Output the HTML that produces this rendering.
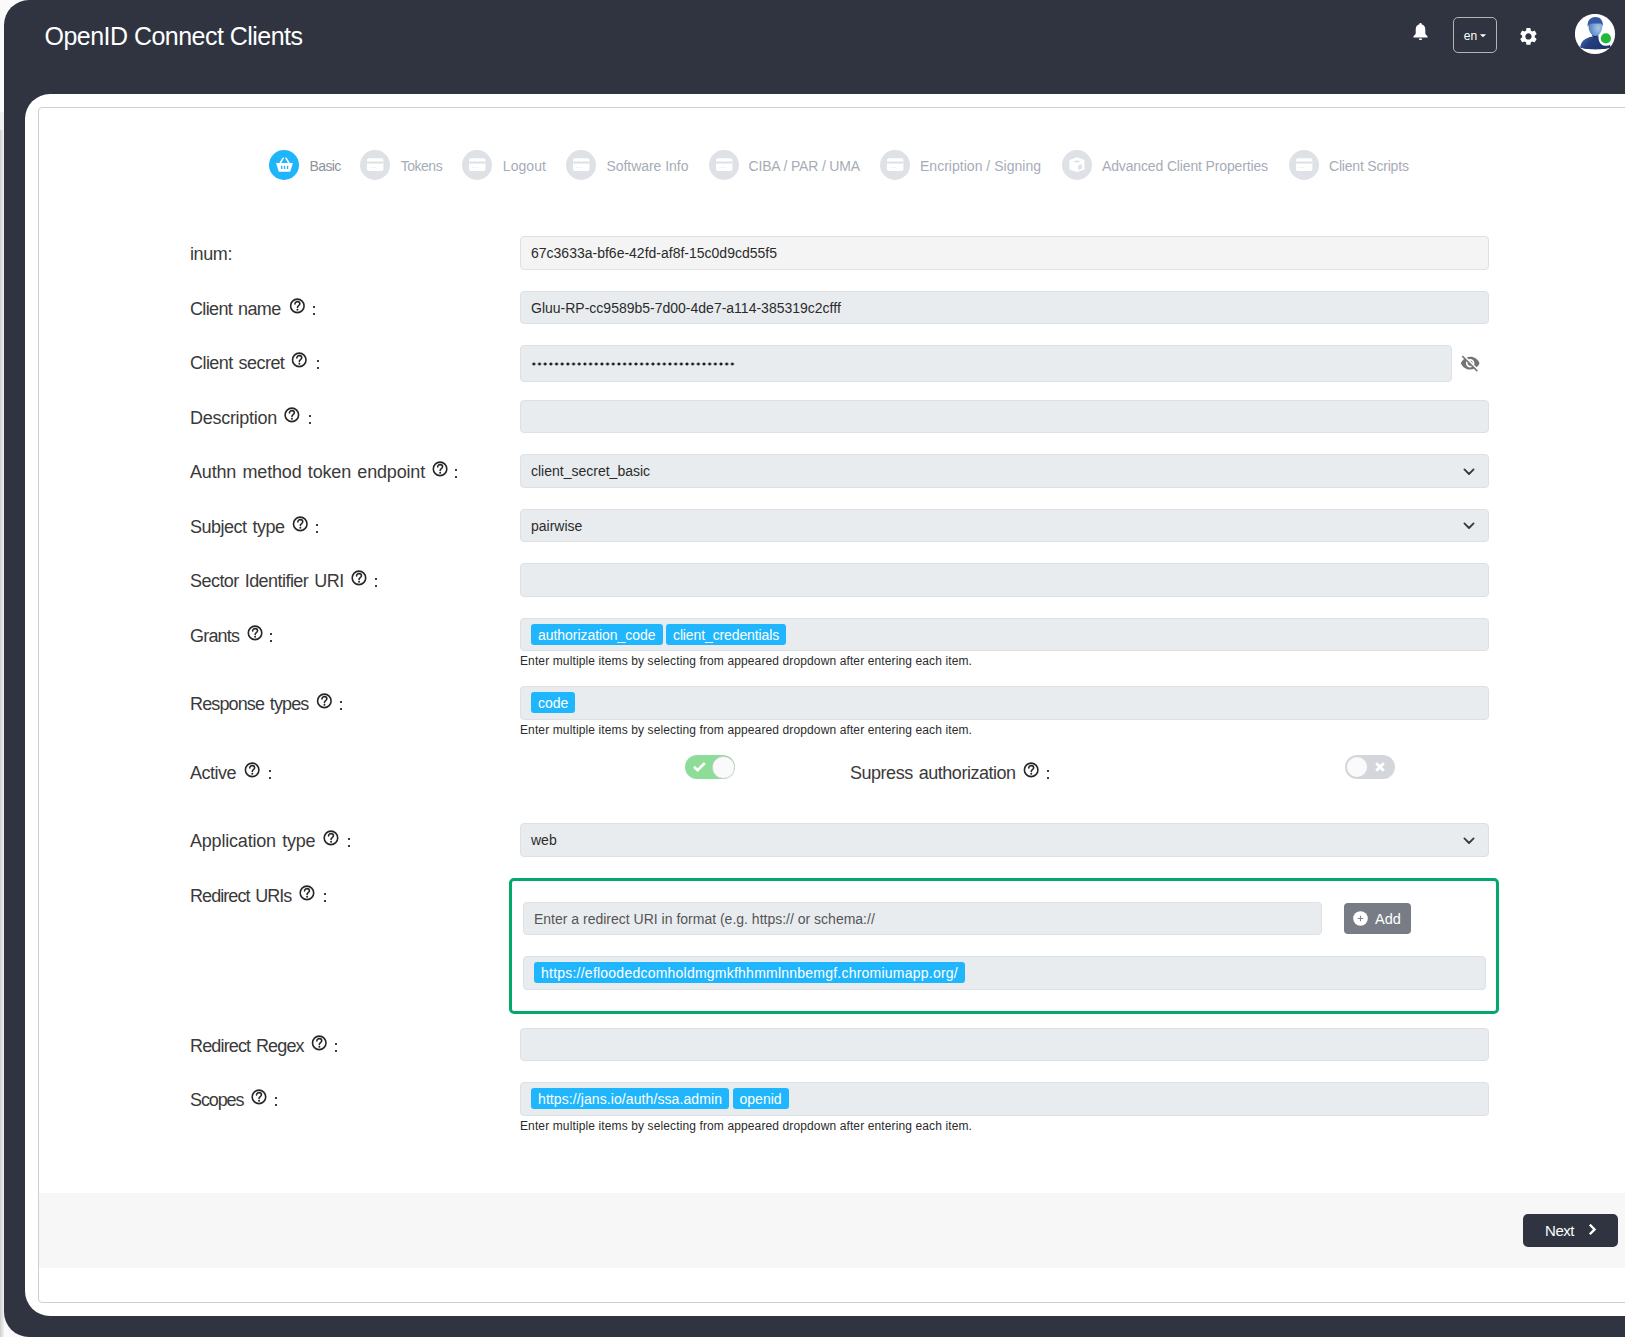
<!DOCTYPE html>
<html><head><meta charset="utf-8">
<style>
*{box-sizing:border-box;}
html,body{margin:0;padding:0;}
body{width:1625px;height:1337px;overflow:hidden;position:relative;background:#fafafa;font-family:"Liberation Sans",sans-serif;color:#2b2b2b;}
.abs{position:absolute;}
.frame{position:absolute;left:4px;top:0;width:1700px;height:1337px;background:#2f3440;border-radius:25px 0 0 25px;}
.title{position:absolute;left:44.5px;top:19.5px;font-size:25px;letter-spacing:-0.53px;color:#fff;white-space:nowrap;line-height:32px;}
.panel{position:absolute;left:25px;top:94px;width:1700px;height:1222px;background:#fff;border-radius:25px 0 0 25px;}
.card{position:absolute;left:38px;top:107px;width:1700px;height:1196px;border:1px solid #cfcfcf;border-radius:4px;background:#fff;}
.footer{position:absolute;left:39px;top:1193px;width:1700px;height:75px;background:#f7f7f7;}
.next{position:absolute;left:1523px;top:1214px;width:95px;height:33px;background:#2f3440;border-radius:5px;color:#fff;font-size:15px;}
.sc{position:absolute;width:30px;height:30px;border-radius:50%;background:#dee2e6;top:150px;}
.sc svg{position:absolute;left:0;top:0;}
.st{position:absolute;top:158px;font-size:14px;color:#a6acb7;white-space:nowrap;line-height:16px;}
.lbl{position:absolute;font-size:18px;color:#3a3a3a;white-space:nowrap;line-height:22px;}
.inp{position:absolute;left:520px;background:#e9ecef;border:1px solid #dde1e5;border-radius:4px;font-size:14px;color:#2b2b2b;white-space:nowrap;}
.inp.ro{background:#f4f4f4;}
.inp span.v{position:absolute;left:10px;line-height:16px;}
.chipwrap{position:absolute;left:10px;display:flex;gap:3.5px;}
.chip{display:block;height:21px;background:#1fb6fd;color:#fff;border-radius:3px;font-size:14px;line-height:23px;padding:0 7px;white-space:nowrap;}
.htxt{position:absolute;left:520px;font-size:12px;color:#2b2b2b;white-space:nowrap;line-height:14px;letter-spacing:0.12px;}
.chev{position:absolute;right:13px;line-height:0;}
.dots{position:absolute;left:9.96px;top:16px;width:204.7px;height:4px;background-image:radial-gradient(circle at 2.843px 2px,#1a1a1a 1.25px,transparent 1.75px);background-size:5.686px 4px;}
</style></head>
<body>
<div class="abs" style="left:0;top:112px;width:4px;height:18px;background:#efefef"></div>
<div class="abs" style="left:0;top:130px;width:4px;height:1207px;background:linear-gradient(90deg,#cdcdcd,#f2f2f2)"></div>
<div class="frame"></div>
<div class="title">OpenID Connect Clients</div>

<!-- header icons -->
<svg class="abs" style="left:1412px;top:22px" width="17" height="19" viewBox="0 0 17 19"><path d="M8.5 1 C9.3 1 9.6 1.6 9.6 2.2 C12 2.8 13.3 4.8 13.3 7.6 L13.3 11.8 L15.6 14.6 L15.6 15.6 L1.4 15.6 L1.4 14.6 L3.7 11.8 L3.7 7.6 C3.7 4.8 5 2.8 7.4 2.2 C7.4 1.6 7.7 1 8.5 1 Z" fill="#fff"/><path d="M6.8 16.4 L10.2 16.4 C10.2 17.4 9.5 18.1 8.5 18.1 C7.5 18.1 6.8 17.4 6.8 16.4Z" fill="#fff"/></svg>
<div class="abs" style="left:1453px;top:17px;width:44px;height:36px;border:1.2px solid #b4b4b4;border-radius:5px;"></div>
<div class="abs" style="left:1463.8px;top:28px;font-size:12px;line-height:16px;color:#fff;letter-spacing:0.1px">en</div>
<svg class="abs" style="left:1479px;top:34px" width="8" height="5" viewBox="0 0 8 5"><path d="M0.9 0.2 L7.1 0.2 L4 3.3Z" fill="#fff"/></svg>
<svg class="abs" style="left:1518px;top:26px" width="20.9" height="20.9" viewBox="0 0 24 24"><path fill="#fff" d="M19.14 12.94c.04-.3.06-.61.06-.94 0-.32-.02-.64-.07-.94l2.03-1.58a.49.49 0 0 0 .12-.61l-1.92-3.32a.488.488 0 0 0-.59-.22l-2.39.96c-.5-.38-1.03-.7-1.62-.94l-.36-2.54a.484.484 0 0 0-.48-.41h-3.84c-.24 0-.43.17-.47.41l-.36 2.54c-.59.24-1.13.57-1.62.94l-2.39-.96c-.22-.08-.47 0-.59.22L2.74 8.87c-.12.21-.08.47.12.61l2.03 1.58c-.05.3-.09.63-.09.94s.02.64.07.94l-2.03 1.58a.49.49 0 0 0-.12.61l1.92 3.32c.12.22.37.29.59.22l2.39-.96c.5.38 1.03.7 1.62.94l.36 2.54c.05.24.24.41.48.41h3.84c.24 0 .44-.17.47-.41l.36-2.54c.59-.24 1.13-.56 1.62-.94l2.39.96c.22.08.47 0 .59-.22l1.92-3.32c.12-.22.07-.47-.12-.61l-2.01-1.58zM12 15.6c-1.98 0-3.6-1.62-3.6-3.6s1.62-3.6 3.6-3.6 3.6 1.62 3.6 3.6-1.62 3.6-3.6 3.6z"/></svg>
<svg class="abs" style="left:1575px;top:14px" width="42" height="42" viewBox="0 0 42 42">
<defs><radialGradient id="fg" cx="0.7" cy="0.55" r="0.7"><stop offset="0" stop-color="#a9c8e8"/><stop offset="1" stop-color="#4f7cc0"/></radialGradient>
<linearGradient id="bg2" x1="0" y1="0" x2="1" y2="0.4"><stop offset="0" stop-color="#4a73b8"/><stop offset="0.45" stop-color="#243d7e"/><stop offset="1" stop-color="#1f3370"/></linearGradient></defs>
<circle cx="20" cy="20" r="20.1" fill="#fff"/>
<path d="M5.2 33.5 C5.6 27.5 10 23.6 17.5 22.4 L23 22.4 C30.5 23.6 35 27.5 35.6 33.5 C30 36 10.5 36 5.2 33.5Z" fill="url(#bg2)"/>
<path d="M17 20.5 L17.5 22.6 C19 23.6 21.5 23.6 23 22.6 L23.5 20.5Z" fill="#1c2f66"/>
<path d="M13.5 12 C13.5 7 16 4 20.3 4 C24.8 4 27.6 7 27.4 12 C27.2 17.5 24.5 22 20.4 22 C16.3 22 13.7 17.5 13.5 12Z" fill="url(#fg)"/>
<path d="M12.6 12.5 C12.3 6.5 15.5 3.1 20.3 3.1 C25.3 3.1 28.3 6.5 27.9 12 C27.2 10.5 26.5 9.8 25.5 9.6 C22 9.2 18.5 9.4 15 9.8 C14 10.5 13.4 11.5 12.6 12.5Z" fill="#3559a6"/>
<circle cx="30.9" cy="24.4" r="7.4" fill="#fff"/><circle cx="30.9" cy="24.4" r="5.1" fill="#20b93a"/>
</svg>

<div class="panel"></div>
<div class="card"></div>

<!-- steps -->
<div class="sc" style="left:269px;background:#1fb5fb"><svg width="30" height="30" viewBox="0 0 30 30"><path d="M7.1 13 L23.9 13 L21.2 21.8 L9.8 21.8 Z" fill="#fff"/><path d="M11.2 13 L14.2 8.2 M19.9 13 L17 8.2" stroke="#fff" stroke-width="1.5" stroke-linecap="round"/><path d="M12.7 15.8 V19 M15.5 15.8 V19 M18.6 15.8 V19" stroke="#1fb5fb" stroke-width="1.3"/></svg></div>
<div class="st" style="left:309.5px;color:#8d939d;letter-spacing:-0.6px">Basic</div>
<div class="sc" style="left:360px"><svg width="30" height="30" viewBox="0 0 30 30"><rect x="7" y="8.2" width="16.4" height="12.8" rx="1.8" fill="#fff"/><rect x="7" y="11.5" width="16.4" height="2.1" fill="#dee2e6"/><path d="M10 17.6 H12 M13 17.6 H16" stroke="#e8eaed" stroke-width="0.6"/></svg></div>
<div class="st" style="left:400.7px;letter-spacing:-0.477px">Tokens</div>
<div class="sc" style="left:462px"><svg width="30" height="30" viewBox="0 0 30 30"><rect x="7" y="8.2" width="16.4" height="12.8" rx="1.8" fill="#fff"/><rect x="7" y="11.5" width="16.4" height="2.1" fill="#dee2e6"/><path d="M10 17.6 H12 M13 17.6 H16" stroke="#e8eaed" stroke-width="0.6"/></svg></div>
<div class="st" style="left:502.8px;letter-spacing:0.062px">Logout</div>
<div class="sc" style="left:566px"><svg width="30" height="30" viewBox="0 0 30 30"><rect x="7" y="8.2" width="16.4" height="12.8" rx="1.8" fill="#fff"/><rect x="7" y="11.5" width="16.4" height="2.1" fill="#dee2e6"/><path d="M10 17.6 H12 M13 17.6 H16" stroke="#e8eaed" stroke-width="0.6"/></svg></div>
<div class="st" style="left:606.4px;letter-spacing:-0.038px">Software Info</div>
<div class="sc" style="left:709px"><svg width="30" height="30" viewBox="0 0 30 30"><rect x="7" y="8.2" width="16.4" height="12.8" rx="1.8" fill="#fff"/><rect x="7" y="11.5" width="16.4" height="2.1" fill="#dee2e6"/><path d="M10 17.6 H12 M13 17.6 H16" stroke="#e8eaed" stroke-width="0.6"/></svg></div>
<div class="st" style="left:748.5px;letter-spacing:-0.163px">CIBA / PAR / UMA</div>
<div class="sc" style="left:880.3px"><svg width="30" height="30" viewBox="0 0 30 30"><rect x="7" y="8.2" width="16.4" height="12.8" rx="1.8" fill="#fff"/><rect x="7" y="11.5" width="16.4" height="2.1" fill="#dee2e6"/><path d="M10 17.6 H12 M13 17.6 H16" stroke="#e8eaed" stroke-width="0.6"/></svg></div>
<div class="st" style="left:920px;letter-spacing:0.018px">Encription / Signing</div>
<div class="sc" style="left:1062px"><svg width="30" height="30" viewBox="0 0 30 30"><path d="M15 7.3 L22.4 10 L22.4 19.5 L15 22.1 L7.4 19.5 L7.4 10 Z" fill="#fff"/><path d="M10.8 11.5 L15 10.2 L19.2 11.5 L15 12.8Z" fill="#dee2e6"/><path d="M16.2 15.3 L19.8 13.9 L19.8 18.8 L16.2 20 Z" fill="#dee2e6"/></svg></div>
<div class="st" style="left:1102px;letter-spacing:-0.141px">Advanced Client Properties</div>
<div class="sc" style="left:1289.4px"><svg width="30" height="30" viewBox="0 0 30 30"><rect x="7" y="8.2" width="16.4" height="12.8" rx="1.8" fill="#fff"/><rect x="7" y="11.5" width="16.4" height="2.1" fill="#dee2e6"/><path d="M10 17.6 H12 M13 17.6 H16" stroke="#e8eaed" stroke-width="0.6"/></svg></div>
<div class="st" style="left:1329px;letter-spacing:-0.198px">Client Scripts</div>

<div class="lbl" style="left:190px;top:243.0px;letter-spacing:-0.403px;word-spacing:0px">inum:</div>
<div class="lbl" style="left:190px;top:298.0px;letter-spacing:-0.641px;word-spacing:1.5px">Client name</div>
<div class="abs" style="left:288px;top:297px;width:17px;height:17px"><svg width="17" height="17" viewBox="0 0 17 17"><circle cx="9.35" cy="8.90" r="6.75" fill="none" stroke="#262626" stroke-width="1.6"/><g transform="translate(1.75,1.35)"><path d="M5.2 5.7 C5.2 4.1 6.3 3.3 7.7 3.3 C9.1 3.3 10.1 4.2 10.1 5.4 C10.1 6.6 9.1 7.1 8.4 7.7 C7.9 8.1 7.7 8.5 7.7 9.2" fill="none" stroke="#262626" stroke-width="1.6" stroke-linecap="round"/><circle cx="7.7" cy="11.45" r="1.0" fill="#262626"/></g></svg></div>
<div class="abs" style="left:313.1px;top:305.9px;width:2px;height:2px;background:#3a3a3a"></div><div class="abs" style="left:313.1px;top:312.9px;width:2px;height:2px;background:#3a3a3a"></div>
<div class="lbl" style="left:190px;top:352.0px;letter-spacing:-0.557px;word-spacing:1.5px">Client secret</div>
<div class="abs" style="left:290px;top:351px;width:17px;height:17px"><svg width="17" height="17" viewBox="0 0 17 17"><circle cx="9.25" cy="8.90" r="6.75" fill="none" stroke="#262626" stroke-width="1.6"/><g transform="translate(1.65,1.35)"><path d="M5.2 5.7 C5.2 4.1 6.3 3.3 7.7 3.3 C9.1 3.3 10.1 4.2 10.1 5.4 C10.1 6.6 9.1 7.1 8.4 7.7 C7.9 8.1 7.7 8.5 7.7 9.2" fill="none" stroke="#262626" stroke-width="1.6" stroke-linecap="round"/><circle cx="7.7" cy="11.45" r="1.0" fill="#262626"/></g></svg></div>
<div class="abs" style="left:316.7px;top:359.9px;width:2px;height:2px;background:#3a3a3a"></div><div class="abs" style="left:316.7px;top:366.9px;width:2px;height:2px;background:#3a3a3a"></div>
<div class="lbl" style="left:190px;top:407.0px;letter-spacing:-0.277px;word-spacing:0px">Description</div>
<div class="abs" style="left:283px;top:406px;width:17px;height:17px"><svg width="17" height="17" viewBox="0 0 17 17"><circle cx="8.85" cy="8.90" r="6.75" fill="none" stroke="#262626" stroke-width="1.6"/><g transform="translate(1.25,1.35)"><path d="M5.2 5.7 C5.2 4.1 6.3 3.3 7.7 3.3 C9.1 3.3 10.1 4.2 10.1 5.4 C10.1 6.6 9.1 7.1 8.4 7.7 C7.9 8.1 7.7 8.5 7.7 9.2" fill="none" stroke="#262626" stroke-width="1.6" stroke-linecap="round"/><circle cx="7.7" cy="11.45" r="1.0" fill="#262626"/></g></svg></div>
<div class="abs" style="left:309.1px;top:414.9px;width:2px;height:2px;background:#3a3a3a"></div><div class="abs" style="left:309.1px;top:421.9px;width:2px;height:2px;background:#3a3a3a"></div>
<div class="lbl" style="left:190px;top:461.0px;letter-spacing:-0.174px;word-spacing:1.5px">Authn method token endpoint</div>
<div class="abs" style="left:431px;top:460px;width:17px;height:17px"><svg width="17" height="17" viewBox="0 0 17 17"><circle cx="9.05" cy="8.90" r="6.75" fill="none" stroke="#262626" stroke-width="1.6"/><g transform="translate(1.45,1.35)"><path d="M5.2 5.7 C5.2 4.1 6.3 3.3 7.7 3.3 C9.1 3.3 10.1 4.2 10.1 5.4 C10.1 6.6 9.1 7.1 8.4 7.7 C7.9 8.1 7.7 8.5 7.7 9.2" fill="none" stroke="#262626" stroke-width="1.6" stroke-linecap="round"/><circle cx="7.7" cy="11.45" r="1.0" fill="#262626"/></g></svg></div>
<div class="abs" style="left:455.3px;top:468.9px;width:2px;height:2px;background:#3a3a3a"></div><div class="abs" style="left:455.3px;top:475.9px;width:2px;height:2px;background:#3a3a3a"></div>
<div class="lbl" style="left:190px;top:516.0px;letter-spacing:-0.514px;word-spacing:1.5px">Subject type</div>
<div class="abs" style="left:291px;top:515px;width:17px;height:17px"><svg width="17" height="17" viewBox="0 0 17 17"><circle cx="9.25" cy="8.90" r="6.75" fill="none" stroke="#262626" stroke-width="1.6"/><g transform="translate(1.65,1.35)"><path d="M5.2 5.7 C5.2 4.1 6.3 3.3 7.7 3.3 C9.1 3.3 10.1 4.2 10.1 5.4 C10.1 6.6 9.1 7.1 8.4 7.7 C7.9 8.1 7.7 8.5 7.7 9.2" fill="none" stroke="#262626" stroke-width="1.6" stroke-linecap="round"/><circle cx="7.7" cy="11.45" r="1.0" fill="#262626"/></g></svg></div>
<div class="abs" style="left:315.5px;top:523.9px;width:2px;height:2px;background:#3a3a3a"></div><div class="abs" style="left:315.5px;top:530.9px;width:2px;height:2px;background:#3a3a3a"></div>
<div class="lbl" style="left:190px;top:570.0px;letter-spacing:-0.546px;word-spacing:1.5px">Sector Identifier URI</div>
<div class="abs" style="left:350px;top:569px;width:17px;height:17px"><svg width="17" height="17" viewBox="0 0 17 17"><circle cx="8.95" cy="8.90" r="6.75" fill="none" stroke="#262626" stroke-width="1.6"/><g transform="translate(1.35,1.35)"><path d="M5.2 5.7 C5.2 4.1 6.3 3.3 7.7 3.3 C9.1 3.3 10.1 4.2 10.1 5.4 C10.1 6.6 9.1 7.1 8.4 7.7 C7.9 8.1 7.7 8.5 7.7 9.2" fill="none" stroke="#262626" stroke-width="1.6" stroke-linecap="round"/><circle cx="7.7" cy="11.45" r="1.0" fill="#262626"/></g></svg></div>
<div class="abs" style="left:375.1px;top:577.9px;width:2px;height:2px;background:#3a3a3a"></div><div class="abs" style="left:375.1px;top:584.9px;width:2px;height:2px;background:#3a3a3a"></div>
<div class="lbl" style="left:190px;top:625.0px;letter-spacing:-0.805px;word-spacing:0px">Grants</div>
<div class="abs" style="left:246px;top:624px;width:17px;height:17px"><svg width="17" height="17" viewBox="0 0 17 17"><circle cx="9.05" cy="8.90" r="6.75" fill="none" stroke="#262626" stroke-width="1.6"/><g transform="translate(1.45,1.35)"><path d="M5.2 5.7 C5.2 4.1 6.3 3.3 7.7 3.3 C9.1 3.3 10.1 4.2 10.1 5.4 C10.1 6.6 9.1 7.1 8.4 7.7 C7.9 8.1 7.7 8.5 7.7 9.2" fill="none" stroke="#262626" stroke-width="1.6" stroke-linecap="round"/><circle cx="7.7" cy="11.45" r="1.0" fill="#262626"/></g></svg></div>
<div class="abs" style="left:269.8px;top:632.9px;width:2px;height:2px;background:#3a3a3a"></div><div class="abs" style="left:269.8px;top:639.9px;width:2px;height:2px;background:#3a3a3a"></div>
<div class="lbl" style="left:190px;top:693.0px;letter-spacing:-0.863px;word-spacing:1.5px">Response types</div>
<div class="abs" style="left:315px;top:692px;width:17px;height:17px"><svg width="17" height="17" viewBox="0 0 17 17"><circle cx="9.35" cy="8.90" r="6.75" fill="none" stroke="#262626" stroke-width="1.6"/><g transform="translate(1.75,1.35)"><path d="M5.2 5.7 C5.2 4.1 6.3 3.3 7.7 3.3 C9.1 3.3 10.1 4.2 10.1 5.4 C10.1 6.6 9.1 7.1 8.4 7.7 C7.9 8.1 7.7 8.5 7.7 9.2" fill="none" stroke="#262626" stroke-width="1.6" stroke-linecap="round"/><circle cx="7.7" cy="11.45" r="1.0" fill="#262626"/></g></svg></div>
<div class="abs" style="left:339.6px;top:700.9px;width:2px;height:2px;background:#3a3a3a"></div><div class="abs" style="left:339.6px;top:707.9px;width:2px;height:2px;background:#3a3a3a"></div>
<div class="lbl" style="left:190px;top:762.0px;letter-spacing:-0.505px;word-spacing:0px">Active</div>
<div class="abs" style="left:243px;top:761px;width:17px;height:17px"><svg width="17" height="17" viewBox="0 0 17 17"><circle cx="9.15" cy="8.90" r="6.75" fill="none" stroke="#262626" stroke-width="1.6"/><g transform="translate(1.55,1.35)"><path d="M5.2 5.7 C5.2 4.1 6.3 3.3 7.7 3.3 C9.1 3.3 10.1 4.2 10.1 5.4 C10.1 6.6 9.1 7.1 8.4 7.7 C7.9 8.1 7.7 8.5 7.7 9.2" fill="none" stroke="#262626" stroke-width="1.6" stroke-linecap="round"/><circle cx="7.7" cy="11.45" r="1.0" fill="#262626"/></g></svg></div>
<div class="abs" style="left:268.5px;top:769.9px;width:2px;height:2px;background:#3a3a3a"></div><div class="abs" style="left:268.5px;top:776.9px;width:2px;height:2px;background:#3a3a3a"></div>
<div class="lbl" style="left:850px;top:762.0px;letter-spacing:-0.477px;word-spacing:1.5px">Supress authorization</div>
<div class="abs" style="left:1022px;top:761px;width:17px;height:17px"><svg width="17" height="17" viewBox="0 0 17 17"><circle cx="9.15" cy="8.90" r="6.75" fill="none" stroke="#262626" stroke-width="1.6"/><g transform="translate(1.55,1.35)"><path d="M5.2 5.7 C5.2 4.1 6.3 3.3 7.7 3.3 C9.1 3.3 10.1 4.2 10.1 5.4 C10.1 6.6 9.1 7.1 8.4 7.7 C7.9 8.1 7.7 8.5 7.7 9.2" fill="none" stroke="#262626" stroke-width="1.6" stroke-linecap="round"/><circle cx="7.7" cy="11.45" r="1.0" fill="#262626"/></g></svg></div>
<div class="abs" style="left:1047.1px;top:769.9px;width:2px;height:2px;background:#3a3a3a"></div><div class="abs" style="left:1047.1px;top:776.9px;width:2px;height:2px;background:#3a3a3a"></div>
<div class="lbl" style="left:190px;top:830.0px;letter-spacing:-0.200px;word-spacing:1.5px">Application type</div>
<div class="abs" style="left:322px;top:829px;width:17px;height:17px"><svg width="17" height="17" viewBox="0 0 17 17"><circle cx="8.95" cy="8.90" r="6.75" fill="none" stroke="#262626" stroke-width="1.6"/><g transform="translate(1.35,1.35)"><path d="M5.2 5.7 C5.2 4.1 6.3 3.3 7.7 3.3 C9.1 3.3 10.1 4.2 10.1 5.4 C10.1 6.6 9.1 7.1 8.4 7.7 C7.9 8.1 7.7 8.5 7.7 9.2" fill="none" stroke="#262626" stroke-width="1.6" stroke-linecap="round"/><circle cx="7.7" cy="11.45" r="1.0" fill="#262626"/></g></svg></div>
<div class="abs" style="left:347.5px;top:837.9px;width:2px;height:2px;background:#3a3a3a"></div><div class="abs" style="left:347.5px;top:844.9px;width:2px;height:2px;background:#3a3a3a"></div>
<div class="lbl" style="left:190px;top:885.0px;letter-spacing:-0.933px;word-spacing:1.5px">Redirect URIs</div>
<div class="abs" style="left:298px;top:884px;width:17px;height:17px"><svg width="17" height="17" viewBox="0 0 17 17"><circle cx="8.95" cy="8.90" r="6.75" fill="none" stroke="#262626" stroke-width="1.6"/><g transform="translate(1.35,1.35)"><path d="M5.2 5.7 C5.2 4.1 6.3 3.3 7.7 3.3 C9.1 3.3 10.1 4.2 10.1 5.4 C10.1 6.6 9.1 7.1 8.4 7.7 C7.9 8.1 7.7 8.5 7.7 9.2" fill="none" stroke="#262626" stroke-width="1.6" stroke-linecap="round"/><circle cx="7.7" cy="11.45" r="1.0" fill="#262626"/></g></svg></div>
<div class="abs" style="left:323.5px;top:892.9px;width:2px;height:2px;background:#3a3a3a"></div><div class="abs" style="left:323.5px;top:899.9px;width:2px;height:2px;background:#3a3a3a"></div>
<div class="lbl" style="left:190px;top:1035.0px;letter-spacing:-0.847px;word-spacing:1.5px">Redirect Regex</div>
<div class="abs" style="left:310px;top:1034px;width:17px;height:17px"><svg width="17" height="17" viewBox="0 0 17 17"><circle cx="9.25" cy="8.90" r="6.75" fill="none" stroke="#262626" stroke-width="1.6"/><g transform="translate(1.65,1.35)"><path d="M5.2 5.7 C5.2 4.1 6.3 3.3 7.7 3.3 C9.1 3.3 10.1 4.2 10.1 5.4 C10.1 6.6 9.1 7.1 8.4 7.7 C7.9 8.1 7.7 8.5 7.7 9.2" fill="none" stroke="#262626" stroke-width="1.6" stroke-linecap="round"/><circle cx="7.7" cy="11.45" r="1.0" fill="#262626"/></g></svg></div>
<div class="abs" style="left:334.6px;top:1042.9px;width:2px;height:2px;background:#3a3a3a"></div><div class="abs" style="left:334.6px;top:1049.9px;width:2px;height:2px;background:#3a3a3a"></div>
<div class="lbl" style="left:190px;top:1089.0px;letter-spacing:-1.108px;word-spacing:0px">Scopes</div>
<div class="abs" style="left:250px;top:1088px;width:17px;height:17px"><svg width="17" height="17" viewBox="0 0 17 17"><circle cx="8.95" cy="8.90" r="6.75" fill="none" stroke="#262626" stroke-width="1.6"/><g transform="translate(1.35,1.35)"><path d="M5.2 5.7 C5.2 4.1 6.3 3.3 7.7 3.3 C9.1 3.3 10.1 4.2 10.1 5.4 C10.1 6.6 9.1 7.1 8.4 7.7 C7.9 8.1 7.7 8.5 7.7 9.2" fill="none" stroke="#262626" stroke-width="1.6" stroke-linecap="round"/><circle cx="7.7" cy="11.45" r="1.0" fill="#262626"/></g></svg></div>
<div class="abs" style="left:274.9px;top:1096.9px;width:2px;height:2px;background:#3a3a3a"></div><div class="abs" style="left:274.9px;top:1103.9px;width:2px;height:2px;background:#3a3a3a"></div>
<div class="inp ro" style="top:236px;height:34px;width:969px"><span class="v" style="top:8.0px">67c3633a-bf6e-42fd-af8f-15c0d9cd55f5</span></div>
<div class="inp" style="top:291px;height:33px;width:969px"><span class="v" style="top:7.5px">Gluu-RP-cc9589b5-7d00-4de7-a114-385319c2cfff</span></div>
<div class="inp" style="top:345px;height:37px;width:932px"><span class="dots"></span></div>
<div class="inp" style="top:400px;height:33px;width:969px"></div>
<div class="inp" style="top:454px;height:34px;width:969px"><span class="v" style="top:8.0px">client_secret_basic</span><span class="chev" style="top:12.7px"><svg width="12" height="8" viewBox="0 0 12 8"><path d="M1.4 1.4 L6 6 L10.6 1.4" fill="none" stroke="#343a40" stroke-width="1.8" stroke-linecap="round" stroke-linejoin="round"/></svg></span></div>
<div class="inp" style="top:509px;height:33px;width:969px"><span class="v" style="top:7.5px">pairwise</span><span class="chev" style="top:12.2px"><svg width="12" height="8" viewBox="0 0 12 8"><path d="M1.4 1.4 L6 6 L10.6 1.4" fill="none" stroke="#343a40" stroke-width="1.8" stroke-linecap="round" stroke-linejoin="round"/></svg></span></div>
<div class="inp" style="top:563px;height:33.5px;width:969px"></div>
<div class="inp" style="top:618px;height:33px;width:969px"><div class="chipwrap" style="top:5.0px"><span class="chip" style="letter-spacing:-0.045px">authorization_code</span><span class="chip" style="letter-spacing:-0.12px">client_credentials</span></div></div>
<div class="inp" style="top:686px;height:34px;width:969px"><div class="chipwrap" style="top:5.0px"><span class="chip" style="letter-spacing:0px">code</span></div></div>
<div class="inp" style="top:823px;height:33.60000000000002px;width:969px"><span class="v" style="top:7.8px">web</span><span class="chev" style="top:12.5px"><svg width="12" height="8" viewBox="0 0 12 8"><path d="M1.4 1.4 L6 6 L10.6 1.4" fill="none" stroke="#343a40" stroke-width="1.8" stroke-linecap="round" stroke-linejoin="round"/></svg></span></div>
<div class="inp" style="top:1028px;height:33px;width:969px"></div>
<div class="inp" style="top:1082px;height:34px;width:969px"><div class="chipwrap" style="top:5.0px"><span class="chip" style="letter-spacing:0.09px">https://jans.io/auth/ssa.admin</span><span class="chip" style="letter-spacing:0px">openid</span></div></div>

<!-- eye icon -->
<svg class="abs" style="left:1460px;top:353px" width="20.4" height="20.4" viewBox="0 0 24 24"><path fill="#747474" d="M12 7c2.76 0 5 2.24 5 5 0 .65-.13 1.26-.36 1.83l2.92 2.92c1.51-1.26 2.7-2.89 3.43-4.750-1.73-4.39-6-7.5-11-7.5-1.4 0-2.74.25-3.98.7l2.160 2.16C10.74 7.13 11.35 7 12 7zM2 4.27l2.28 2.28.46.46C3.08 8.3 1.78 10.02 1 12c1.73 4.39 6 7.5 11 7.5 1.55 0 3.03-.3 4.38-.84l.42.42L19.73 22 21 20.73 3.27 3 2 4.27zM7.53 9.8l1.55 1.55c-.05.21-.08.43-.08.65 0 1.66 1.34 3 3 3 .22 0 .44-.03.65-.08l1.55 1.55c-.67.33-1.41.53-2.2.53-2.76 0-5-2.24-5-5 0-.79.2-1.530.53-2.2zm4.31-.78l3.15 3.15.02-.16c0-1.66-1.34-3-3-3l-.17.01z"/></svg>

<!-- help texts -->
<div class="htxt" style="top:654px">Enter multiple items by selecting from appeared dropdown after entering each item.</div>
<div class="htxt" style="top:722.5px">Enter multiple items by selecting from appeared dropdown after entering each item.</div>
<div class="htxt" style="top:1119px">Enter multiple items by selecting from appeared dropdown after entering each item.</div>

<!-- toggles -->
<div class="abs" style="left:685px;top:755px;width:50px;height:24px;border-radius:12px;background:#8ddc98;"></div>
<div class="abs" style="left:712.5px;top:756.5px;width:21px;height:21px;border-radius:50%;background:#fafafa;box-shadow:0 0 0 0.8px #d8d3de;"></div>
<svg class="abs" style="left:692px;top:761px" width="15" height="12" viewBox="0 0 15 12"><path d="M2 5.8 L5.6 9.2 L12.8 2" fill="none" stroke="#fff" stroke-width="2.6"/></svg>
<div class="abs" style="left:1345px;top:755px;width:50px;height:24px;border-radius:12px;background:#d3d7dc;"></div>
<div class="abs" style="left:1346.5px;top:756.8px;width:20.5px;height:20.5px;border-radius:50%;background:#fafafa;"></div>
<svg class="abs" style="left:1374px;top:761px" width="12" height="12" viewBox="0 0 12 12"><path d="M2.2 2.2 L9.8 9.8 M9.8 2.2 L2.2 9.8" stroke="#fff" stroke-width="2.7"/></svg>

<!-- redirect box -->
<div class="abs" style="left:509px;top:878px;width:990px;height:135.5px;border:3px solid #03a96b;border-radius:5px;background:#fff;"></div>
<div class="inp" style="left:523px;top:902px;width:799px;height:33px;"><span class="v" style="top:7.5px;color:#555;">Enter a redirect URI in format (e.g. https:// or schema://</span></div>
<div class="abs" style="left:1344px;top:903px;width:67px;height:31px;border-radius:4px;background:#787d85;"></div>
<svg class="abs" style="left:1353px;top:911px" width="15" height="15" viewBox="0 0 15 15"><circle cx="7.5" cy="7.5" r="7.3" fill="#fff"/><path d="M7.5 4.8 V10.2 M4.8 7.5 H10.2" stroke="#80858c" stroke-width="1.1"/></svg>
<div class="abs" style="left:1375px;top:911px;font-size:14.5px;line-height:16px;color:#fff;">Add</div>
<div class="inp" style="left:523px;top:956px;width:963px;height:33.5px;"><div class="chipwrap" style="top:5px"><span class="chip" style="letter-spacing:0.23px">https://efloodedcomholdmgmkfhhmmlnnbemgf.chromiumapp.org/</span></div></div>

<div class="footer"></div>
<div class="next"><span class="abs" style="left:22px;top:8px;line-height:17px;letter-spacing:-0.45px;">Next</span>
<svg class="abs" style="left:64.5px;top:9px" width="9" height="13" viewBox="0 0 9 13"><path d="M1.8 1.6 L6.6 6.4 L1.8 11.2" fill="none" stroke="#fff" stroke-width="2.3"/></svg></div>
</body></html>
